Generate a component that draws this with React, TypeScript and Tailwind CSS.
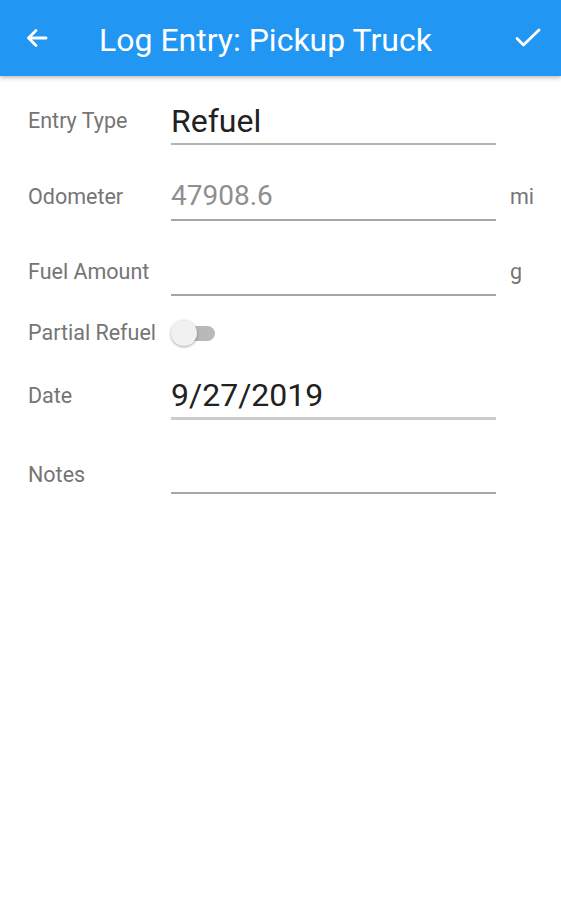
import React from "react";

const ArrowBack = () => (
  <svg width="22" height="20" viewBox="0 0 22 20" fill="none" stroke="white" strokeWidth="2.8" strokeLinecap="round" strokeLinejoin="round">
    <path d="M20 10H3" />
    <path d="M10 2.5L2.5 10L10 17.5" />
  </svg>
);

const CheckIcon = () => (
  <svg width="26" height="20" viewBox="0 0 26 20" fill="none" stroke="white" strokeWidth="2.8" strokeLinecap="round" strokeLinejoin="round">
    <path d="M2 10.5L8.5 17L24 2" />
  </svg>
);

interface FieldRowProps {
  label: string;
  value?: string;
  valueClass?: string;
  unit?: string;
  lineClass?: string;
  labelClass?: string;
  className?: string;
}

const FieldRow: React.FC<FieldRowProps> = ({ label, value, valueClass, unit, lineClass, labelClass, className }) => (
  <div className={`flex items-center h-[48px] ${className ?? ""}`}>
    <div className={`w-[143px] shrink-0 text-[21.5px] text-[#757575] ${labelClass ?? ""}`}>{label}</div>
    <div className={`w-[325px] self-stretch flex items-center ${lineClass ?? "border-b-2 border-[#a6a6a6]"}`}>
      {value && <span className={valueClass}>{value}</span>}
    </div>
    {unit && <div className="ml-[14px] text-[21.5px] text-[#757575]">{unit}</div>}
  </div>
);

export default function App() {
  return (
    <div className="w-[561px] h-[900px] bg-white font-['Roboto','Liberation_Sans',sans-serif] overflow-hidden">
      <header className="h-[76px] bg-[#2196f3] flex items-center shadow-[0_2px_4px_rgba(0,0,0,0.25)] relative">
        <div className="ml-[26px] flex items-center">
          <ArrowBack />
        </div>
        <h1 className="ml-[51px] mt-[4px] text-[32px] text-white leading-none">Log Entry: Pickup Truck</h1>
        <div className="ml-auto mr-[20px] flex items-center">
          <CheckIcon />
        </div>
      </header>

      <main className="pl-[28px]">
        <FieldRow
          className="mt-[21px]"
          label="Entry Type"
          value="Refuel"
          valueClass="text-[32px] text-[#212121] pt-[2px]"
          lineClass="border-b-2 border-[#b4b4b4]"
        />
        <FieldRow
          className="mt-[28px]"
          label="Odometer"
          value="47908.6"
          valueClass="text-[28px] text-[#8f8f8f]"
          unit="mi"
        />
        <FieldRow className="mt-[27px]" label="Fuel Amount" unit="g" />

        <div className="flex items-center h-[30px] mt-[22px]">
          <div className="w-[143px] shrink-0 text-[21.5px] text-[#757575]">Partial Refuel</div>
          <div className="relative w-[44px] h-[26px] flex items-center">
            <div className="ml-[6px] w-[38px] h-[15px] rounded-full bg-[#b9b9b9]" />
            <div className="absolute left-0 top-0 w-[26px] h-[26px] rounded-full bg-[#f1f1f1] shadow-[0_1px_3px_rgba(0,0,0,0.35)]" />
          </div>
        </div>

        <FieldRow
          className="mt-[24px]"
          label="Date"
          value="9/27/2019"
          valueClass="text-[32px] text-[#212121]"
          lineClass="border-b-[3px] border-[#cccccc]"
        />
        <FieldRow className="mt-[26px]" label="Notes" labelClass="mt-[10px]" />
      </main>
    </div>
  );
}
